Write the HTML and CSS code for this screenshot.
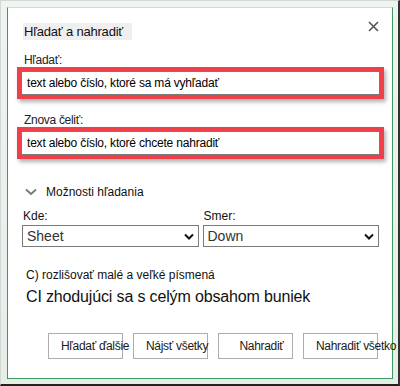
FILE: index.html
```html
<!DOCTYPE html>
<html lang="sk">
<head>
  <meta charset="UTF-8">
  <title>Hľadať a nahradiť</title>
  <link rel="stylesheet" href="styles.css">
</head>
<body>
  <div class="frame">
    <div class="dialog">
      <div class="title-row">
        <div class="title">Hľadať a nahradiť</div>
        <svg class="close" width="11" height="11" viewBox="0 0 11 11">
          <path d="M1 1 L10 10 M10 1 L1 10" stroke="#555" stroke-width="1.6" fill="none"/>
        </svg>
      </div>

      <div class="label first">Hľadať:</div>
      <div class="highlight">
        <div class="field">text alebo číslo, ktoré sa má vyhľadať</div>
      </div>

      <div class="label second">Znova čeliť:</div>
      <div class="highlight">
        <div class="field">text alebo číslo, ktoré chcete nahradiť</div>
      </div>

      <div class="options">
        <svg width="12" height="8" viewBox="0 0 12 8">
          <path d="M1 1.5 L6 6 L11 1.5" stroke="#777" stroke-width="1.8" fill="none"/>
        </svg>
        <span>Možnosti hľadania</span>
      </div>

      <div class="selects">
        <div class="select-group">
          <div class="small-label">Kde:</div>
          <div class="select">
            <span>Sheet</span>
            <svg width="10" height="7" viewBox="0 0 10 7">
              <path d="M1 1.5 L5 5.5 L9 1.5" stroke="#111" stroke-width="2" fill="none"/>
            </svg>
          </div>
        </div>
        <div class="select-group">
          <div class="small-label">Smer:</div>
          <div class="select">
            <span>Down</span>
            <svg width="10" height="7" viewBox="0 0 10 7">
              <path d="M1 1.5 L5 5.5 L9 1.5" stroke="#111" stroke-width="2" fill="none"/>
            </svg>
          </div>
        </div>
      </div>

      <div class="check-small">C) rozlišovať malé a veľké písmená</div>
      <div class="check-big">CI zhodujúci sa s celým obsahom buniek</div>

      <div class="buttons">
        <div class="btn">Hľadať ďalšie</div>
        <div class="btn">Nájsť všetky</div>
        <div class="btn">Nahradiť</div>
        <div class="btn">Nahradiť všetko</div>
      </div>
    </div>
  </div>
</body>
</html>
```

FILE: styles.css
```css
body {
  margin: 0;
  font-family: "Liberation Sans", Arial, sans-serif;
  color: #111;
}
.frame {
  width: 400px;
  height: 386px;
  box-sizing: border-box;
  border-top: 1px solid #d4d8d5;
  border-left: 1px solid #d4d8d5;
  border-right: 2px solid #333;
  border-bottom: 2px solid #222;
  padding: 6px 5px 5px 6px;
  background: linear-gradient(#eef4f0, #e4eee7);
}
.dialog {
  height: 100%;
  box-sizing: border-box;
  background: #fff;
  border: 1px solid #3d9960;
  border-top-color: #c9dfd0;
  padding: 15px 8px 0 9px;
}
.title-row {
  display: flex;
  justify-content: space-between;
  align-items: flex-start;
}
.title {
  margin-left: 6px;
  background: #efefef;
  height: 17px;
  line-height: 17px;
  width: 108px;
  padding-left: 1px;
  font-size: 13px;
  letter-spacing: -0.2px;
}
.close {
  margin-top: -2px;
  margin-right: 5px;
}
.label {
  margin-left: 7px;
  font-size: 12px;
  line-height: 13px;
  color: #222;
  letter-spacing: -0.3px;
}
.label.first {
  margin-top: 14px;
}
.label.second {
  margin-top: 15px;
}
.highlight {
  border: 4px solid #ef3f48;
  box-shadow: 2px 3px 4px rgba(0, 0, 0, 0.3);
}
.field {
  height: 22px;
  border: 1px solid #7a7a7a;
  padding-left: 5px;
  font-size: 12px;
  line-height: 22px;
  letter-spacing: -0.2px;
  color: #000;
}
.options {
  display: flex;
  align-items: center;
  gap: 9px;
  margin: 25px 0 0 8px;
  font-size: 12px;
  line-height: 16px;
}
.selects {
  display: flex;
  gap: 4px;
  margin: 10px 0 0 5px;
  width: 357px;
}
.select-group {
  flex: 1;
}
.small-label {
  font-size: 12px;
  line-height: 13px;
  margin-left: 1px;
}
.select {
  margin-top: 2px;
  height: 20px;
  border: 1px solid #7a7a7a;
  display: flex;
  align-items: center;
  justify-content: space-between;
  padding: 0 4px 0 4px;
  font-size: 14px;
  color: #333;
}
.check-small {
  margin: 21px 0 0 9px;
  font-size: 12px;
  line-height: 14px;
}
.check-big {
  margin: 5px 0 0 9px;
  font-size: 16px;
  line-height: 20px;
  letter-spacing: -0.15px;
}
.buttons {
  display: flex;
  gap: 10px;
  margin: 26px 0 0 31px;
}
.btn {
  width: 75px;
  height: 26px;
  box-sizing: border-box;
  border: 1px solid #adadad;
  padding-left: 12px;
  font-size: 12px;
  line-height: 24px;
  letter-spacing: -0.3px;
  text-align: center;
  white-space: nowrap;
  color: #1a1a1a;
}
```
